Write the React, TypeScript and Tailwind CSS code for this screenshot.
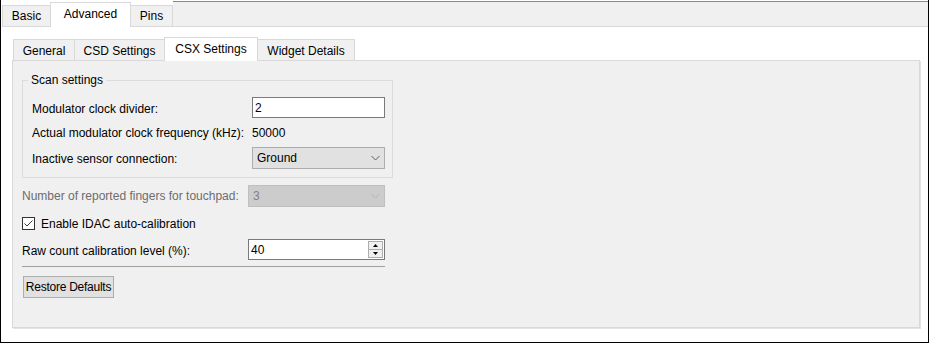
import React from 'react';

function TopTab({ label, w, selected, first }: { label: string; w: string; selected?: boolean; first?: boolean }) {
  if (selected) {
    return (
      <div className={`${w} h-[25px] ${first ? '' : '-ml-px'} relative z-10 flex items-center justify-center border-t border-l border-r border-[#d9d9d9] bg-white pb-[2px]`}>
        {label}
      </div>
    );
  }
  return (
    <div className={`${w} h-[22px] ${first ? '' : '-ml-px'} flex items-center justify-center border border-[#d9d9d9] bg-[#f0f0f0]`}>
      {label}
    </div>
  );
}

function InnerTab({ label, w, selected, first }: { label: string; w: string; selected?: boolean; first?: boolean }) {
  if (selected) {
    return (
      <div className={`${w} h-[24px] -mb-px ${first ? '' : '-ml-px'} relative z-10 flex items-center justify-center border-t border-l border-r border-[#d9d9d9] bg-white pb-[1px]`}>
        {label}
      </div>
    );
  }
  return (
    <div className={`${w} h-[21px] ${first ? '' : '-ml-px'} flex items-center justify-center border-t border-l border-r border-[#d9d9d9] bg-[#f0f0f0] pt-[2px]`}>
      {label}
    </div>
  );
}

function Chevron({ color }: { color: string }) {
  return (
    <svg width="9" height="6" viewBox="0 0 9 6">
      <path d="M0.5 1 L4.5 5 L8.5 1" fill="none" stroke={color} strokeWidth="1" />
    </svg>
  );
}

function Spin() {
  return (
    <div className="w-[15px] h-[17px] flex flex-col border border-[#adadad] bg-[#f0f0f0]">
      <div className="flex-1 flex items-center justify-center border-b border-[#adadad]">
        <svg width="5" height="3" viewBox="0 0 5 3">
          <path d="M2.5 0 L5 3 L0 3 Z" fill="#000" />
        </svg>
      </div>
      <div className="flex-1 flex items-center justify-center">
        <svg width="5" height="3" viewBox="0 0 5 3">
          <path d="M0 0 L5 0 L2.5 3 Z" fill="#000" />
        </svg>
      </div>
    </div>
  );
}

export default function App() {
  return (
    <div className="w-[929px] h-[343px] bg-white font-['Liberation_Sans',Arial,sans-serif] text-[12px] leading-[14px] text-black">
      <div className="w-full h-full flex flex-col border-l border-r border-b border-black">
        {/* Top tab strip */}
        <div className="flex items-end h-[27px]">
          <div className="w-px" />
          <TopTab label="Basic" w="w-[49px]" first />
          <TopTab label="Advanced" w="w-[81px]" selected />
          <TopTab label="Pins" w="w-[43px]" />
          <div className="flex-1 h-[26px] bg-[#f0f0f0] border-t border-t-[#8a8a8a] border-b border-b-[#d9d9d9]" />
        </div>

        {/* Advanced page */}
        <div className="flex-1 flex flex-col pl-[11px] pt-[10px] pb-[14px]">
          <div className="flex items-end h-[23px]">
            <div className="w-px" />
            <InnerTab label="General" w="w-[62px]" first />
            <InnerTab label="CSD Settings" w="w-[91px]" />
            <InnerTab label="CSX Settings" w="w-[94px]" selected />
            <InnerTab label="Widget Details" w="w-[98px]" />
          </div>

          <div className="w-[908px] flex-1 bg-[#f0f0f0] border border-[#d9d9d9] shadow-[1px_1px_0_#e3e3e3] pl-[9px] pt-[12px]">
            {/* Scan settings group */}
            <fieldset className="w-[371px] border border-[#dcdcdc] pb-[7px]">
              <legend className="ml-[5px] px-[3px] leading-[14px]">Scan settings</legend>
              <div className="pt-[8px] pl-[9px] flex flex-col">
                <div className="h-[25px] flex items-center">
                  <div className="w-[220px] pt-[2px]">Modulator clock divider:</div>
                  <div className="w-[133px] h-[21px] border border-[#7a7a7a] bg-white flex items-center px-[2px]">2</div>
                </div>
                <div className="h-[25px] flex items-center">
                  <div className="w-[220px]">Actual modulator clock frequency (kHz):</div>
                  <div>50000</div>
                </div>
                <div className="h-[25px] flex items-center">
                  <div className="w-[220px] pt-[2px]">Inactive sensor connection:</div>
                  <div className="w-[133px] h-[22px] border border-[#adadad] bg-[#e1e1e1] flex items-center justify-between pl-[4px] pr-[4px]">
                    <span>Ground</span>
                    <Chevron color="#606060" />
                  </div>
                </div>
              </div>
            </fieldset>

            {/* Other settings */}
            <div className="w-[363px] flex flex-col">
              <div className="mt-[7px] h-[22px] flex items-center">
                <div className="w-[226px] text-[#6d6d6d]">Number of reported fingers for touchpad:</div>
                <div className="w-[137px] h-[22px] border border-[#bfbfbf] bg-[#cccccc] flex items-center justify-between pl-[4px] pr-[4px] text-[#838383]">
                  <span>3</span>
                  <Chevron color="#b5b5b5" />
                </div>
              </div>

              <div className="mt-[10px] h-[13px] flex items-center">
                <div className="w-[13px] h-[13px] border border-[#333333] bg-white flex items-center justify-center">
                  <svg width="11" height="11" viewBox="0 0 11 11">
                    <path d="M1.5 5.5 L4 8 L9.5 2.5" fill="none" stroke="#333333" strokeWidth="1" />
                  </svg>
                </div>
                <div className="ml-[6px]">Enable IDAC auto-calibration</div>
              </div>

              <div className="mt-[9px] h-[21px] flex items-center">
                <div className="w-[226px] pt-[2px]">Raw count calibration level (%):</div>
                <div className="w-[137px] h-[21px] border border-[#7a7a7a] bg-white flex items-center justify-between pl-[2px] pr-px">
                  <span>40</span>
                  <Spin />
                </div>
              </div>

              <div className="mt-[6px] h-px bg-[#a0a0a0]" />

              <div className="mt-[9px]">
                <button className="ml-px w-[91px] h-[22px] border border-[#adadad] bg-[#e1e1e1] flex items-center justify-center whitespace-nowrap tracking-[-0.25px]">
                  Restore Defaults
                </button>
              </div>
            </div>
          </div>
        </div>
      </div>
    </div>
  );
}
